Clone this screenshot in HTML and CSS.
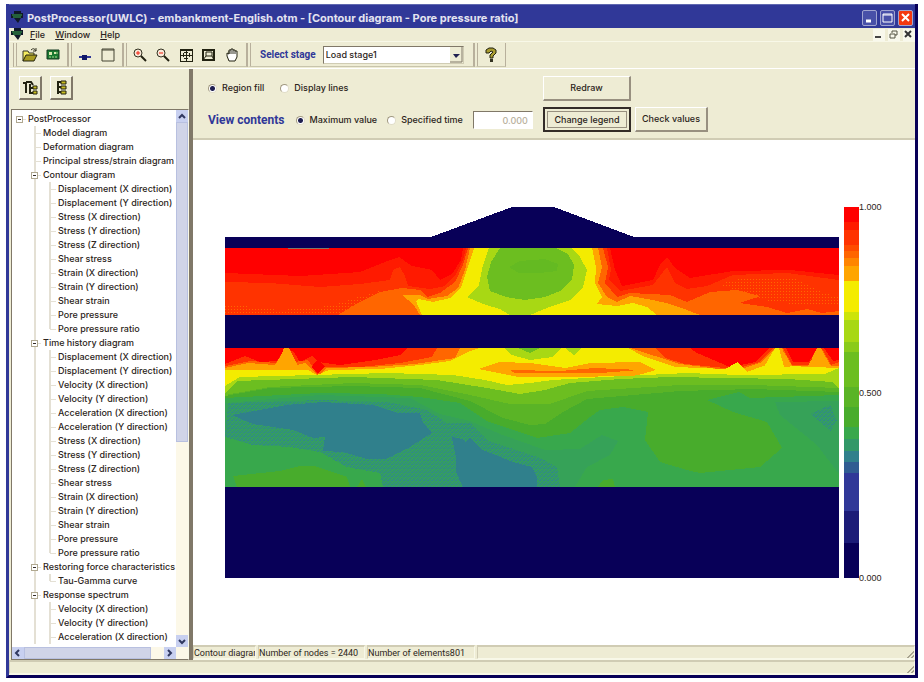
FILE: index.html
```html
<!DOCTYPE html>
<html lang="en">

<head>
    <meta charset="utf-8" />
    <meta name="viewport" content="width=device-width, initial-scale=1.0" />
    <title>PostProcessor(UWLC)</title>
    <link rel="stylesheet" href="styles.css">
</head>

<body>
    <div class="window">

        <header class="titlebar">
            <svg class="app-icon" width="13" height="13" viewBox="0 0 13 13">
                <path d="M3 0h7v2h2v5h-2l-3 5-4-5H0V3h3z" fill="#101828" />
                <path d="M1 4h10M2 6h8" stroke="#38a84c" />
            </svg>
            <h1>PostProcessor(UWLC) - embankment-English.otm - [Contour diagram - Pore pressure ratio]</h1>
            <div class="caption">
                <button aria-label="Minimize"><svg width="13" height="13"><path d="M3 10h5" stroke="#fff" stroke-width="3" /></svg></button>
                <button aria-label="Maximize"><svg width="13" height="13"><path d="M2 3h9v8H2zM2 4h9" fill="none" stroke="#fff" /></svg></button>
                <button class="close" aria-label="Close"><svg width="13" height="13"><path d="M3 3l7 7M10 3l-7 7" stroke="#fff" stroke-width="2" /></svg></button>
            </div>
        </header>

        <nav class="menubar">
            <svg class="app-icon" width="13" height="13" viewBox="0 0 13 13">
                <path d="M3 0h7v2h2v5h-2l-3 5-4-5H0V3h3z" fill="#101828" />
                <path d="M1 4h10M2 6h8" stroke="#38a84c" />
            </svg>
            <a href="#"><u>F</u>ile</a>
            <a href="#"><u>W</u>indow</a>
            <a href="#"><u>H</u>elp</a>
            <div class="mdi">
                <button aria-label="Minimize document"><svg width="11" height="11"><path d="M2 8h6" stroke="#444" stroke-width="2" /></svg></button>
                <button aria-label="Restore document"><svg width="11" height="11"><path d="M4 4V2h5v4H7M2 5h5v4H2z" fill="none" stroke="#554" /></svg></button>
                <button aria-label="Close document"><svg width="11" height="11"><path d="M2 2l6 6M8 2l-6 6" stroke="#333" stroke-width="2" /></svg></button>
            </div>
        </nav>

        <div class="toolbar">
            <div class="group">
                <button aria-label="Open"><svg width="16" height="16">
                    <path d="M1 14V4h5l1 2h5v3" fill="#f4ec60" stroke="#332" />
                    <path d="M1 14l3-6h11l-3 6z" fill="#a89c20" stroke="#221" />
                    <path d="M9 3q3-3 5 1m0-3v3h-3" fill="none" stroke="#332" />
                </svg></button>
                <button aria-label="Print chart"><svg width="16" height="16">
                    <path d="M2 3h12v9H2z" fill="#187830" stroke="#143820" />
                    <path d="M4 5h3v3H4zM9 5h2v2H9z" fill="#d8e8b0" />
                    <path d="M4 10h8M12 5v3" stroke="#a8d890" stroke-dasharray="2 1" />
                </svg></button>
            </div>
            <div class="group">
                <button aria-label="Point"><svg width="16" height="16">
                    <path d="M2 10h12" stroke="#303898" stroke-width="2" />
                    <path d="M5 8h5v5H5z" fill="#101868" />
                </svg></button>
                <button aria-label="Frame"><svg width="16" height="16">
                    <path d="M2 2h12v12H2z" fill="none" stroke="#443" />
                    <path d="M2 3h12" stroke="#443" />
                </svg></button>
            </div>
            <div class="group">
                <button aria-label="Zoom in"><svg width="16" height="16">
                    <circle cx="6" cy="6" r="4" fill="#f8e8d8" stroke="#332" />
                    <path d="M4 6h4M6 4v4" stroke="#f42010" />
                    <path d="M9 9l5 5" stroke="#221" stroke-width="2" />
                </svg></button>
                <button aria-label="Zoom out"><svg width="16" height="16">
                    <circle cx="6" cy="6" r="4" fill="#f8e8d8" stroke="#332" />
                    <path d="M4 6h4" stroke="#f42010" />
                    <path d="M9 9l5 5" stroke="#221" stroke-width="2" />
                </svg></button>
                <button aria-label="Fit"><svg width="16" height="16" shape-rendering="crispEdges">
                    <path d="M2 2h12v12H2zM8 2v12M2 8h12" fill="none" stroke="#221" />
                    <path d="M2 3h12M6 5h4M6 11h4M5 6v4M11 6v4" fill="none" stroke="#221" />
                </svg></button>
                <button aria-label="Zoom window"><svg width="16" height="16">
                    <path d="M2 3h11v10H2z" fill="none" stroke="#221" stroke-width="2" />
                    <path d="M5 5h6v4H5zM2 13l3-4M11 9l2 4" fill="none" stroke="#221" />
                </svg></button>
                <button aria-label="Pan"><svg width="16" height="16">
                    <path d="M5 14L3 9V6l2 1V3h2V2h2v1h2v1h2v6l-2 4z" fill="#fff" stroke="#221" />
                    <path d="M5 4v3M7 3v4M9 3v4M11 4v3" stroke="#332" />
                </svg></button>
            </div>
            <div class="group stage">
                <label for="stage">Select stage</label>
                <select id="stage">
                    <option>Load stage1</option>
                </select>
            </div>
            <div class="group">
                <button aria-label="Help"><svg width="16" height="16">
                    <path d="M3 6V3l3-2h4l3 2v3l-3 3v2H7V8l3-3-2-1-2 2z" fill="#a89c30" stroke="#221" />
                    <path d="M7 12h3v3H7z" fill="#332" />
                </svg></button>
            </div>
        </div>

        <div class="workspace">
            <aside class="sidebar">
                <div class="tree-tools">
                    <button aria-label="Expand tree"><svg width="17" height="17">
                        <path d="M1 4h3M4 3v11M4 3h5l2 3M8 5v9h4M8 9h3" fill="none" stroke="#221" stroke-width="2" />
                        <path d="M11 7h4v3h-4zM11 12h4v3h-4z" fill="#c8bc20" stroke="#221" />
                    </svg></button>
                    <button aria-label="Collapse tree"><svg width="17" height="17">
                        <path d="M5 2v13M5 3h4M5 8h4M5 13h4" fill="none" stroke="#221" stroke-width="2" />
                        <path d="M8 2h5v3H8zM8 7h5v3H8zM8 12h5v3H8z" fill="#c8bc20" stroke="#221" />
                    </svg></button>
                </div>
                <div class="tree-box">
                    <div class="tree-row">
                        <ul class="tree">
                            <li><button class="toggle" aria-label="Collapse"></button>PostProcessor
                                <ul>
                                    <li>Model diagram</li>
                                    <li>Deformation diagram</li>
                                    <li>Principal stress/strain diagram</li>
                                    <li><button class="toggle" aria-label="Collapse"></button>Contour diagram
                                        <ul>
                                            <li>Displacement (X direction)</li>
                                            <li>Displacement (Y direction)</li>
                                            <li>Stress (X direction)</li>
                                            <li>Stress (Y direction)</li>
                                            <li>Stress (Z direction)</li>
                                            <li>Shear stress</li>
                                            <li>Strain (X direction)</li>
                                            <li>Strain (Y direction)</li>
                                            <li>Shear strain</li>
                                            <li>Pore pressure</li>
                                            <li>Pore pressure ratio</li>
                                        </ul>
                                    </li>
                                    <li><button class="toggle" aria-label="Collapse"></button>Time history diagram
                                        <ul>
                                            <li>Displacement (X direction)</li>
                                            <li>Displacement (Y direction)</li>
                                            <li>Velocity (X direction)</li>
                                            <li>Velocity (Y direction)</li>
                                            <li>Acceleration (X direction)</li>
                                            <li>Acceleration (Y direction)</li>
                                            <li>Stress (X direction)</li>
                                            <li>Stress (Y direction)</li>
                                            <li>Stress (Z direction)</li>
                                            <li>Shear stress</li>
                                            <li>Strain (X direction)</li>
                                            <li>Strain (Y direction)</li>
                                            <li>Shear strain</li>
                                            <li>Pore pressure</li>
                                            <li>Pore pressure ratio</li>
                                        </ul>
                                    </li>
                                    <li><button class="toggle" aria-label="Collapse"></button>Restoring force characteristics
                                        <ul>
                                            <li>Tau-Gamma curve</li>
                                        </ul>
                                    </li>
                                    <li class="more"><button class="toggle" aria-label="Collapse"></button>Response spectrum
                                        <ul>
                                            <li>Velocity (X direction)</li>
                                            <li>Velocity (Y direction)</li>
                                            <li class="more">Acceleration (X direction)</li>
                                        </ul>
                                    </li>
                                </ul>
                            </li>
                        </ul>
                        <div class="vscroll">
                            <button aria-label="Scroll up"><svg width="11" height="11"><path d="M3 7l3-3 3 3" fill="none" stroke="#303860" stroke-width="2" /></svg></button>
                            <div class="thumb"></div>
                            <button class="end" aria-label="Scroll down"><svg width="11" height="11"><path d="M3 4l3 3 3-3" fill="none" stroke="#303860" stroke-width="2" /></svg></button>
                        </div>
                    </div>
                    <div class="hscroll">
                        <button aria-label="Scroll left"><svg width="11" height="11"><path d="M7 2L4 5l3 3" fill="none" stroke="#303860" stroke-width="2" /></svg></button>
                        <div class="thumb"></div>
                        <button class="end" aria-label="Scroll right"><svg width="11" height="11"><path d="M4 2l3 3-3 3" fill="none" stroke="#303860" stroke-width="2" /></svg></button>
                    </div>
                </div>
            </aside>

            <main class="view">
                <form class="options">
                    <div class="choices">
                        <div class="line">
                            <label><input type="radio" name="style" checked>Region fill</label>
                            <label><input type="radio" name="style">Display lines</label>
                        </div>
                        <div class="line">
                            <strong>View contents</strong>
                            <label><input type="radio" name="contents" checked>Maximum value</label>
                            <label><input type="radio" name="contents">Specified time</label>
                            <input class="time" type="text" value="0.000" aria-label="Time" disabled>
                        </div>
                    </div>
                    <div class="actions">
                        <button type="button" class="redraw">Redraw</button>
                        <button type="button" class="default">Change legend</button>
                        <button type="button">Check values</button>
                    </div>
                </form>

                <div class="canvas">
                    <svg class="contour" viewBox="225 207 614 371" preserveAspectRatio="none" shape-rendering="crispEdges">
                        <defs>
                            <clipPath id="upper"><path d="M225 248h614v67H225z" /></clipPath>
                            <clipPath id="lower"><path d="M225 348h614v139H225z" /></clipPath>
                            <pattern id="tealDots" width="4" height="4" patternUnits="userSpaceOnUse">
                                <path d="M0 0h4v4H0z" fill="#349c64" />
                                <path d="M0 0h1v1H0zM2 2h1v1H2zM3 0h1v1H3zM1 3h1v1H1z" fill="#30888a" />
                            </pattern>
                            <pattern id="orangeDots" width="3" height="3" patternUnits="userSpaceOnUse">
                                <path d="M0 0h3v3H0z" fill="#ff3300" />
                                <path d="M0 0h1v1H0z" fill="#ff6600" />
                            </pattern>
                        </defs>

                        <!-- embankment and soil body -->
                        <path d="M225 237H431L512 207H554L634 237H839V578H225z" fill="#080058" />

                        <!-- upper layer -->
                        <g clip-path="url(#upper)">
                            <path d="M225 248h614v67H225z" fill="#ff0000" />
                            <path d="M225 273L300 276 360 272 385 262 399 257 412 266 432 270 440 280 452 274 461 260 463 248H610L615 270 622 286 653 280 660 265 667 257 675 268 690 278 733 271 790 270 839 275V315H225z" fill="#ff1a00" />
                            <path d="M225 282L270 283 320 287 360 284 390 280 393 270 400 267 405 276 408 286 430 289 445 286 456 274 463 260 466 248H607L611 270 609 280 620 291 653 285 660 276 667 267 675 283 687 289 707 286 733 275 787 273 839 280V315H225z" fill="#ff3300" />
                            <path d="M225 304L280 310 330 306 365 295 380 291V315H225zM720 284L740 279 795 279 820 291 839 297V306L790 304 750 298z" fill="url(#orangeDots)" />
                            <path d="M338 315L358 303 380 292 402 288 420 290 427 297 440 293 455 282 463 265 468 248H603L608 267 605 283 617 297 630 293 670 295 687 302 710 292 737 290 760 296 740 303 767 307 787 313 807 309 822 313 839 311V315z" fill="#ff6600" />
                            <path d="M402 295H420L428 299 447 296 458 288 465 270 470 248H598L602 267 598 283 607 297 617 302 630 296 653 300 670 304 687 310 700 315H420L414 305z" fill="#ffa500" />
                            <path d="M422 315L416 301 418 299 433 302 450 298 461 288 467 270 474 248H592L596 267 595 283 602 297 597 304 617 306 633 303 647 307 657 315z" fill="#f4ec00" />
                            <path d="M489 248L483 265 479 285 467 297 483 304 500 309 510 315H530L547 308 570 300 583 287 587 270 580 257 571 248z" fill="#a8d814" />
                            <path d="M500 248L491 262 487 277 490 291 506 297 525 300 545 297 560 291 572 280 574 265 568 254 556 248z" fill="#6cbe20" />
                            <path d="M509 267L520 261 545 259 558 264 557 271 540 273 519 273z" fill="#64ba22" />
                        </g>
                        <path d="M288 248h41v1h-41z" fill="#807868" />

                        <!-- lower layer -->
                        <g clip-path="url(#lower)">
                            <path d="M225 348h614v139H225z" fill="#ff0000" />
                            <path d="M225 364L245 356 260 362 277 361 285 348 294 352 300 362 312 356 318 362 340 365 375 360 400 355 408 348H690L697 353 730 367 755 362 770 348H786L793 362 809 362 817 348H824L833 361 839 360V380H225z" fill="#ff3300" />
                            <path d="M225 366L250 361 276 363 286 348 295 362 308 360 317 374 325 367 360 367 400 363 432 357 437 348H655L665 358 685 364 735 369 760 362 773 348H783L792 365 809 365 817 349 823 350 831 365 839 362V380H225z" fill="#ff6600" />
                            <path d="M225 368L248 363 275 365 286 347 297 365 305 363 312 370 318 376 326 368 370 367 415 364 455 358 460 348H630L655 356 680 364 735 371 760 363 775 348 784 352 792 366 808 366 818 348 831 366H839V380H225z" fill="#ffa500" />
                            <path d="M225 370L308 370 317 375 329 370 380 369 420 365 450 361 470 351 480 348H628L645 357 675 367 725 369 738 362 747 372 763 366 770 366H788L839 368V392H225z" fill="#f4ec00" />
                            <path d="M284 348H289L299 368H277zM817 348H821L831 367H808zM776 348H782L790 367H770z" fill="#ffa500" />
                            <path d="M775 348H779L784 367H764z" fill="#f4ec00" />
                            <path d="M313 364L318 360 325 366 318 373 312 368z" fill="#ff0000" />
                            <path d="M504 348H561L553 357 530 360 512 355zM565 348H581L574 355z" fill="#a8d814" />
                            <path d="M518 348H540L530 353z" fill="#6cbe20" />
                            <path d="M478 369L500 362 530 363 565 368 590 363 640 362 656 370 635 376 560 377 518 377z" fill="#ffa500" />
                            <path d="M510 370L560 371 595 368 640 370 600 373 515 373z" fill="#ff6600" />
                            <path d="M225 386L240 377 387 373 453 375 485 380 507 385 530 383 553 380 603 377 687 373 740 375 825 374 839 368V395H225z" fill="#a8d814" />
                            <path d="M225 393L237 381 353 377 437 380 487 388 520 394 545 390 570 383 620 379 670 377 787 379 832 382 839 388V420H225z" fill="#6cbe20" />
                            <path d="M225 395L270 387 353 383 420 385 470 395 510 404 550 404 587 391 680 385 753 385 839 388V440H460z" fill="#5ab426" />
                            <path d="M225 396L270 388 353 386 420 388 470 401 503 418 530 425 545 424 563 412 587 399 680 391 753 389 839 392V487H225z" fill="#48ac2c" />
                            <path d="M225 398L320 393 380 394 420 397 460 403 487 421 537 438 570 433 590 417 600 410 623 407 648 412 645 440 660 462 687 470 700 473 760 467 782 448 767 422 733 412 707 400 739 392 750 398 839 395V487H225z" fill="#38a84c" />
                            <path d="M225 436L253 443 300 447 340 458 380 468 383 487 560 487 575 487 587 467 610 455 618 441 602 435 580 449 545 450 500 434 470 421 440 414 410 398 320 395 225 403zM775 402L839 401V474L817 445 780 415z" fill="#36a258" />
                            <path d="M228 403L320 400 387 402 427 410 447 423 470 423 487 440 540 458 557 467 560 487H383L380 473 347 467 320 452 290 447 253 445 225 437z" fill="url(#tealDots)" />
                            <path d="M232 415L287 405 323 402 373 405 397 413H420L423 422 432 433 410 447 390 457 386 459H367L343 452 323 451 325 437 313 438 293 430 253 424z" fill="#30808c" />
                            <path d="M452 437L463 439 465 442 470 438 483 450 513 462 532 467 537 477V487H463L456 472 456 457z" fill="#30808c" />
                            <path d="M810 414L830 405 837 420 831 431z" fill="url(#tealDots)" />
                            <path d="M233 476L280 471 300 466H315L347 477 350 487H237zM598 487L603 480 613 479 615 487zM357 487L362 479 366 487z" fill="#48ac2c" />
                        </g>
                    </svg>
                    <div class="legend">
                        <div class="scale"></div>
                        <div class="marks"><span>1.000</span><span>0.500</span><span>0.000</span></div>
                    </div>
                </div>

                <footer class="status">
                    <span class="kind">Contour diagram</span>
                    <span class="nodes">Number of nodes = 2440</span>
                    <span class="elements">Number of elements801</span>
                    <span class="rest"></span>
                </footer>
            </main>
        </div>

        <footer class="status">
            <span class="rest"></span>
        </footer>
    </div>
</body>

</html>
```
FILE: styles.css
```css
* {
    box-sizing: border-box;
}

body {
    margin: 4px 6px;
    background: #fff;
    font-family: Inter, "Liberation Sans", sans-serif;
    font-size: 9px;
    font-weight: 500;
    line-height: 14px;
    color: #2c2420;
}

button,
input,
select {
    font: inherit;
    color: inherit;
    margin: 0;
    padding: 0;
    border-radius: 0;
}

button {
    background: none;
    border: 0;
}

svg {
    display: block;
}

.window {
    display: flex;
    flex-direction: column;
    height: calc(100vh - 8px);
    background: #eeecd4;
    border: 3px solid #303898;
    border-top: 0;
    border-right-color: #080058;
    border-bottom-color: #080058;
}

/* title and menu */

.titlebar {
    display: flex;
    align-items: center;
    flex: none;
    height: 24px;
    padding: 2px 2px 0;
    background: #303898;
    border-top: 1px solid #6068b0;
    color: #e4e4f0;
}

.titlebar h1 {
    margin: 0 0 0 3px;
    font-size: 11px;
    font-weight: bold;
    white-space: pre;
}

.caption {
    display: flex;
    gap: 3px;
    margin-left: auto;
}

.caption button {
    width: 15px;
    height: 16px;
    border: 1px solid #a0a4d0;
    border-radius: 2px;
    background: #4850a8;
}

.caption .close {
    background: #f43810;
}

.menubar {
    display: flex;
    align-items: center;
    flex: none;
    height: 14px;
    padding-left: 2px;
    border-bottom: 1px solid #f8f8e8;
}

.menubar a {
    margin-left: 6px;
    margin-right: 4px;
    color: inherit;
    text-decoration: none;
}

.mdi {
    display: flex;
    gap: 3px;
    margin-left: auto;
}

.mdi button {
    width: 12px;
    height: 12px;
    background: #f8f8ec;
}

/* toolbar */

.toolbar {
    display: flex;
    flex: none;
    height: 27px;
    padding: 1px 4px;
    border-bottom: 1px solid #fff;
}

.group {
    display: flex;
    align-items: center;
    gap: 7px;
    padding: 0 6px 0 5px;
    border-left: 4px double #b8b09c;
    border-right: 1px solid #b8b09c;
    border-bottom: 1px solid #c8c4ac;
}

.group button {
    width: 16px;
    height: 16px;
}

.stage {
    padding-left: 9px;
    padding-right: 9px;
}

.stage label {
    color: #303898;
    font-family: Roboto, "Liberation Sans", sans-serif;
    font-size: 10px;
    font-weight: bold;
}

.stage select {
    width: 141px;
    height: 18px;
    padding-left: 2px;
    appearance: none;
    border: 1px solid #807868;
    border-right-color: #d0ccb4;
    border-bottom-color: #d0ccb4;
    background: #fff url("data:image/svg+xml,%3Csvg xmlns='http://www.w3.org/2000/svg' width='13' height='16'%3E%3Cpath d='M0 0h13v16H0z' fill='%23eeecd4'/%3E%3Cpath d='M0 15h12V0' fill='none' stroke='%23807868'/%3E%3Cpath d='M3 7h7L6 11z' fill='%23202050'/%3E%3C/svg%3E") no-repeat right center;
}

/* tree pane */

.workspace {
    display: flex;
    flex: 1;
    min-height: 0;
}

.sidebar {
    display: flex;
    flex-direction: column;
    flex: none;
    width: 184px;
    padding-left: 2px;
    border-right: 4px solid #807868;
}

.tree-tools {
    display: flex;
    gap: 8px;
    flex: none;
    height: 40px;
    padding: 7px 8px;
}

.tree-tools button {
    width: 23px;
    height: 24px;
    padding: 2px;
    border: 1px solid #fff;
    border-right: 2px solid #807868;
    border-bottom: 2px solid #807868;
}

.tree-box {
    display: flex;
    flex-direction: column;
    flex: 1;
    min-height: 0;
    border: 1px solid #807868;
    border-right-color: #f8f8e8;
}

.tree-row {
    display: flex;
    flex: 1;
    min-height: 0;
    background: #fff;
}

.tree,
.tree ul {
    list-style: none;
    margin: 0;
    padding: 0;
}

.tree {
    flex: 1;
    min-width: 0;
    padding: 2px 0 0 7px;
    overflow: hidden;
    white-space: nowrap;
}

.tree ul {
    margin-left: 6px;
}

.tree li {
    position: relative;
    padding-left: 9px;
}

.tree ul li::before {
    content: "";
    position: absolute;
    left: 0;
    top: 0;
    bottom: 0;
    border-left: 2px solid #e4e0d4;
}

.tree ul li:last-child:not(.more)::before {
    bottom: auto;
    height: 7px;
}

.tree li::after {
    content: "";
    position: absolute;
    left: 1px;
    top: 7px;
    width: 6px;
    border-top: 1px solid #e4e0d4;
}

.toggle {
    position: absolute;
    z-index: 1;
    left: -3px;
    top: 4px;
    width: 7px;
    height: 7px;
    border: 1px solid #b0a890;
    background: linear-gradient(#332c28, #332c28) no-repeat center / 3px 1px #fff;
}

.vscroll {
    display: flex;
    flex-direction: column;
    flex: none;
    width: 12px;
    background: #fcf8e8;
}

.vscroll .thumb {
    height: 320px;
    background: #d0d4e8;
    border: 1px solid #b8c0e0;
}

.vscroll button,
.hscroll button {
    width: 12px;
    height: 12px;
    background: #c8d0f0;
}

.vscroll .end {
    margin-top: auto;
}

.hscroll {
    display: flex;
    flex: none;
    background: #fcf8e8;
    padding-right: 12px;
}

.hscroll .thumb {
    width: 127px;
    border: 1px solid #b8c0e0;
    background: #d0d4e8;
}

.hscroll .end {
    margin-left: auto;
}

/* option panel */

.view {
    display: flex;
    flex-direction: column;
    flex: 1;
    min-width: 0;
}

.options {
    display: flex;
    flex: none;
    height: 71px;
    padding: 7px 15px 0;
    border-bottom: 2px solid #d0ccb4;
}

.choices {
    width: 335px;
}

.line {
    display: flex;
    align-items: center;
    height: 24px;
    margin-bottom: 8px;
    white-space: nowrap;
}

.line label {
    display: flex;
    align-items: center;
    margin-right: 16px;
}

.line strong {
    margin-right: 11px;
    color: #303898;
    font-family: Roboto, "Liberation Sans", sans-serif;
    font-size: 12px;
    font-weight: bold;
}

.line + .line label {
    margin-right: 10px;
}

input[type="radio"] {
    appearance: none;
    width: 9px;
    height: 9px;
    margin-right: 5px;
    border: 1px solid #a09880;
    border-right-color: #e0dcc8;
    border-bottom-color: #e0dcc8;
    border-radius: 50%;
    background: #fff;
}

input[type="radio"]:checked {
    background: radial-gradient(#202050 2px, #fff 3px);
}

.time {
    width: 60px;
    height: 18px;
    margin-left: auto;
    margin-right: 11px;
    padding-right: 4px;
    border: 1px solid #807868;
    border-right-color: #fff;
    border-bottom-color: #fff;
    background: #fff;
    color: #b8b09c;
    text-align: right;
}

.actions {
    display: grid;
    grid-template-columns: 88px 73px;
    grid-template-rows: 25px 25px;
    gap: 6px 4px;
}

.actions button {
    border: 1px solid #fff;
    border-right: 2px solid #989080;
    border-bottom: 2px solid #989080;
}

.actions .redraw {
    grid-column: 1;
}

.actions .default {
    grid-column: 1;
    border: 2px solid #332c28;
    outline: 1px solid #989080;
    outline-offset: -5px;
}

/* drawing area */

.canvas {
    display: flex;
    flex: 1;
    min-height: 0;
    align-items: flex-start;
    padding: 67px 31px 0 32px;
    background: #fff;
}

.contour {
    flex: 1;
    min-width: 0;
    height: 371px;
}

.legend {
    display: flex;
    height: 371px;
    margin-left: 5px;
}

.scale {
    width: 15px;
    background: linear-gradient(#ff0000 0 15px, #ff1a00 0 23px, #ff3300 0 38px, #ff4c00 0 44px, #ff6600 0 51px,
            #ff8500 0 59px, #ffa500 0 74px, #f4ec00 0 105px, #cce40a 0 113px, #a8d814 0 135px, #8acb1a 0 145px,
            #6cbe20 0 180px, #5ab426 0 200px, #48ac2c 0 220px, #38a84c 0 232px, #329868 0 244px, #30808c 0 255px,
            #305c92 0 266px, #303898 0 304px, #1c1c78 0 336px, #080058 0);
}

.marks {
    display: flex;
    flex-direction: column;
    justify-content: space-between;
    width: 25px;
    margin: -7px 0;
    font-family: "Liberation Sans Narrow", "Liberation Sans", sans-serif;
}

/* status bars */

.status {
    display: flex;
    flex: none;
    height: 15px;
    font-family: Roboto, "Liberation Sans", sans-serif;
    font-weight: 400;
    line-height: 12px;
    border-bottom: 1px solid #f8f8e8;
}

.status span {
    margin-right: 2px;
    border: 1px solid #d0ccb4;
    border-top-width: 2px;
    border-right-color: #f8f8e8;
    border-bottom-color: #f8f8e8;
    overflow: hidden;
    white-space: nowrap;
}

.status .kind {
    width: 63px;
}

.status .nodes {
    width: 107px;
}

.status .elements {
    width: 108px;
}

.status .rest {
    flex: 1;
    margin-right: 0;
    background: linear-gradient(135deg, #eeecd4 50%, transparent 50%) no-repeat right bottom / 10px 10px,
        repeating-linear-gradient(135deg, #a8a490 0 1px, #eeecd4 1px 3px) no-repeat right bottom / 10px 10px;
}
```
